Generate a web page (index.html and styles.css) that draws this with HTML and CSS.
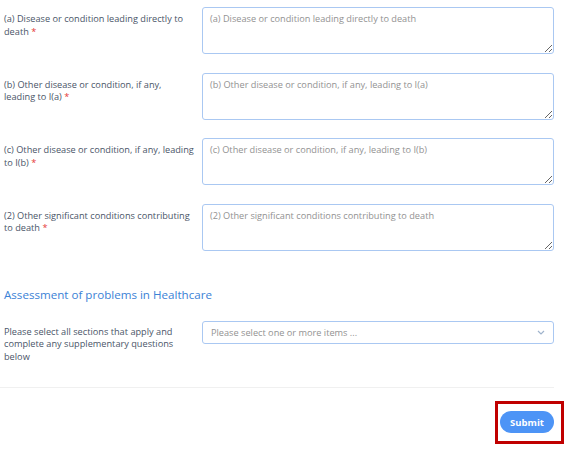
FILE: index.html
```html
<!DOCTYPE html>
<html lang="en">
<head>
    <meta charset="UTF-8">
    <meta name="viewport" content="width=device-width, initial-scale=1.0">
    <title>Cause of Death</title>
    <link rel="stylesheet" href="styles.css">
</head>
<body>
    <div class="form">
        <!-- Causa de muerte -->
        <div class="row">
            <label for="causeA">(a) Disease or condition leading directly to death <span class="req">*</span></label>
            <textarea id="causeA" placeholder="(a) Disease or condition leading directly to death"></textarea>
        </div>
        <div class="row">
            <label for="causeB">(b) Other disease or condition, if any, leading to I(a) <span class="req">*</span></label>
            <textarea id="causeB" placeholder="(b) Other disease or condition, if any, leading to I(a)"></textarea>
        </div>
        <div class="row">
            <label for="causeC">(c) Other disease or condition, if any, leading to I(b) <span class="req">*</span></label>
            <textarea id="causeC" placeholder="(c) Other disease or condition, if any, leading to I(b)"></textarea>
        </div>
        <div class="row">
            <label for="causeOther">(2) Other significant conditions contributing to death <span class="req">*</span></label>
            <textarea id="causeOther" placeholder="(2) Other significant conditions contributing to death"></textarea>
        </div>

        <h2 class="section-title">Assessment of problems in Healthcare</h2>

        <div class="row row-select">
            <label for="problems">Please select all sections that apply and complete any supplementary questions below</label>
            <div class="select" id="problems">
                <span class="select-placeholder">Please select one or more items ...</span>
                <svg class="chevron" width="8" height="5" viewBox="0 0 8 5">
                    <path d="M1 1 L4 4 L7 1" fill="none" stroke="#9fb3cc" stroke-width="1.2"/>
                </svg>
            </div>
        </div>

        <div class="divider"></div>

        <div class="actions">
            <div class="highlight">
                <button type="submit">Submit</button>
            </div>
        </div>
    </div>
</body>
</html>
```

FILE: styles.css
```css
body {
    margin: 0;
    padding: 0;
    background-color: #ffffff;
    font-family: "Open Sans", sans-serif;
}

.form {
    width: 554px;
    padding-top: 7px;
}

.row {
    display: grid;
    grid-template-columns: 202px 352px;
    margin-bottom: 18.5px;
}

.row label {
    padding: 6px 7.5px 0 4px;
    font-size: 9.2px;
    line-height: 12.6px;
    color: #4a5568;
}

.req {
    color: #e53935;
}

textarea {
    height: 47px;
    box-sizing: border-box;
    margin: 0;
    padding: 4px 7px;
    border: 1px solid #aac8f2;
    border-radius: 3px;
    font-family: "Open Sans", sans-serif;
    font-size: 9.2px;
    color: #4a5568;
}

textarea::placeholder {
    color: #929292;
}

.section-title {
    margin: 36px 0 19px 4px;
    font-size: 11.6px;
    font-weight: normal;
    color: #3b82d6;
}

.row-select label {
    padding-top: 5px;
    line-height: 12.6px;
}

.select {
    height: 23px;
    box-sizing: border-box;
    padding: 0 8px;
    border: 1px solid #aac8f2;
    border-radius: 3px;
    display: flex;
    align-items: center;
    justify-content: space-between;
}

.select-placeholder {
    font-size: 9.2px;
    color: #929292;
}

.divider {
    height: 1px;
    background-color: #f0f0f0;
    margin-top: 24px;
}

.actions {
    display: flex;
    justify-content: flex-end;
    margin-top: 13px;
    margin-right: -10px;
}

.highlight {
    border: 3px solid #c00000;
    padding: 7px 7px 8px 2px;
}

button {
    display: block;
    width: 54px;
    height: 22px;
    border: none;
    border-radius: 11px;
    background-color: #4d94f6;
    color: white;
    font-family: "Open Sans", sans-serif;
    font-size: 9.5px;
    font-weight: bold;
    cursor: pointer;
}
```
